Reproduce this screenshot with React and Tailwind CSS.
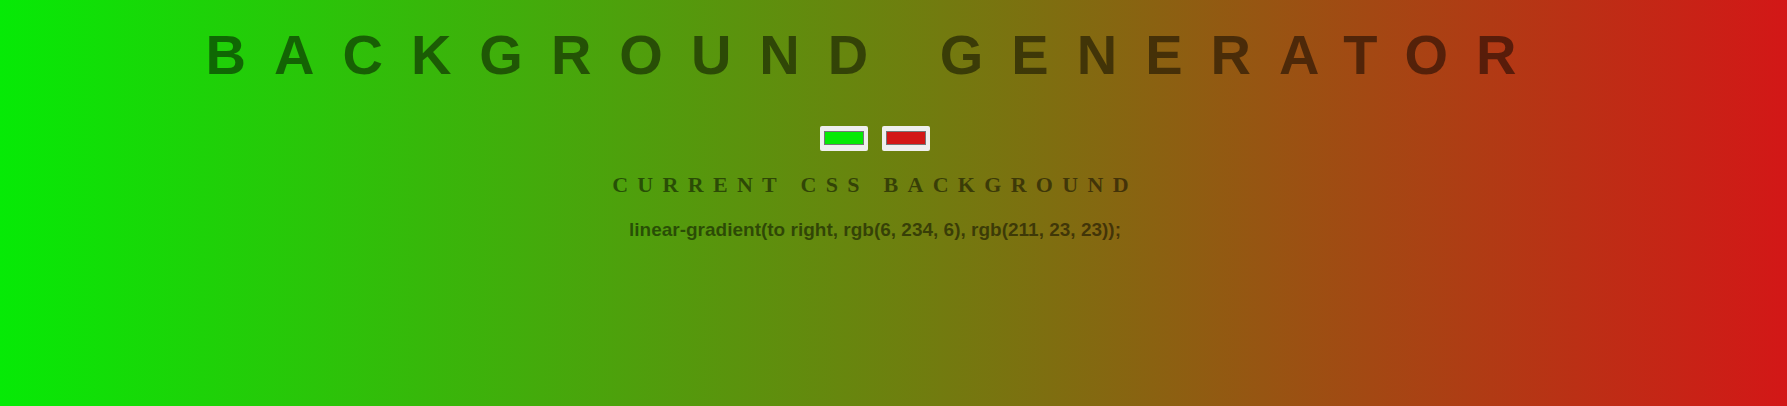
import React, { useState } from "react";

const App = () => {
  const [color1, setColor1] = useState("#06ea06");
  const [color2, setColor2] = useState("#d31717");

  const toRgb = (hex) => {
    const n = parseInt(hex.slice(1), 16);
    return `rgb(${(n >> 16) & 255}, ${(n >> 8) & 255}, ${n & 255})`;
  };

  const css = `linear-gradient(to right, ${toRgb(color1)}, ${toRgb(color2)})`;

  const inputClass =
    "w-12 h-[25px] bg-[#efefef] border-0 rounded-[2px] px-[4px] pt-[5px] pb-[6px] cursor-pointer [&::-webkit-color-swatch-wrapper]:p-0 [&::-webkit-color-swatch]:border [&::-webkit-color-swatch]:border-solid [&::-webkit-color-swatch]:border-[#777] [&::-webkit-color-swatch]:rounded-none";

  return (
    <div
      className="w-full h-[406px] overflow-hidden text-black/50 text-center uppercase"
      style={{ background: css }}
    >
      <div className="flex flex-col items-center pr-[37px]">
        <h1 className="mt-[23px] text-[56px] leading-[64px] font-bold tracking-[28px] font-['Liberation_Sans',Arial,sans-serif] whitespace-nowrap">
          Background Generator
        </h1>

        <div className="mt-[39px] flex gap-[14px]">
          <input
            type="color"
            name="color1"
            value={color1}
            onChange={(e) => setColor1(e.target.value)}
            className={inputClass}
          />
          <input
            type="color"
            name="color2"
            value={color2}
            onChange={(e) => setColor2(e.target.value)}
            className={inputClass}
          />
        </div>

        <h3 className="mt-[22px] text-[22px] leading-[24px] font-bold tracking-[9.3px] font-['Liberation_Serif','Times_New_Roman',serif]">
          Current CSS Background
        </h3>

        <p className="mt-[22px] text-[19px] leading-[22px] font-bold normal-case font-['Liberation_Sans',Arial,sans-serif]">
          {css};
        </p>
      </div>
    </div>
  );
};

export default App;
